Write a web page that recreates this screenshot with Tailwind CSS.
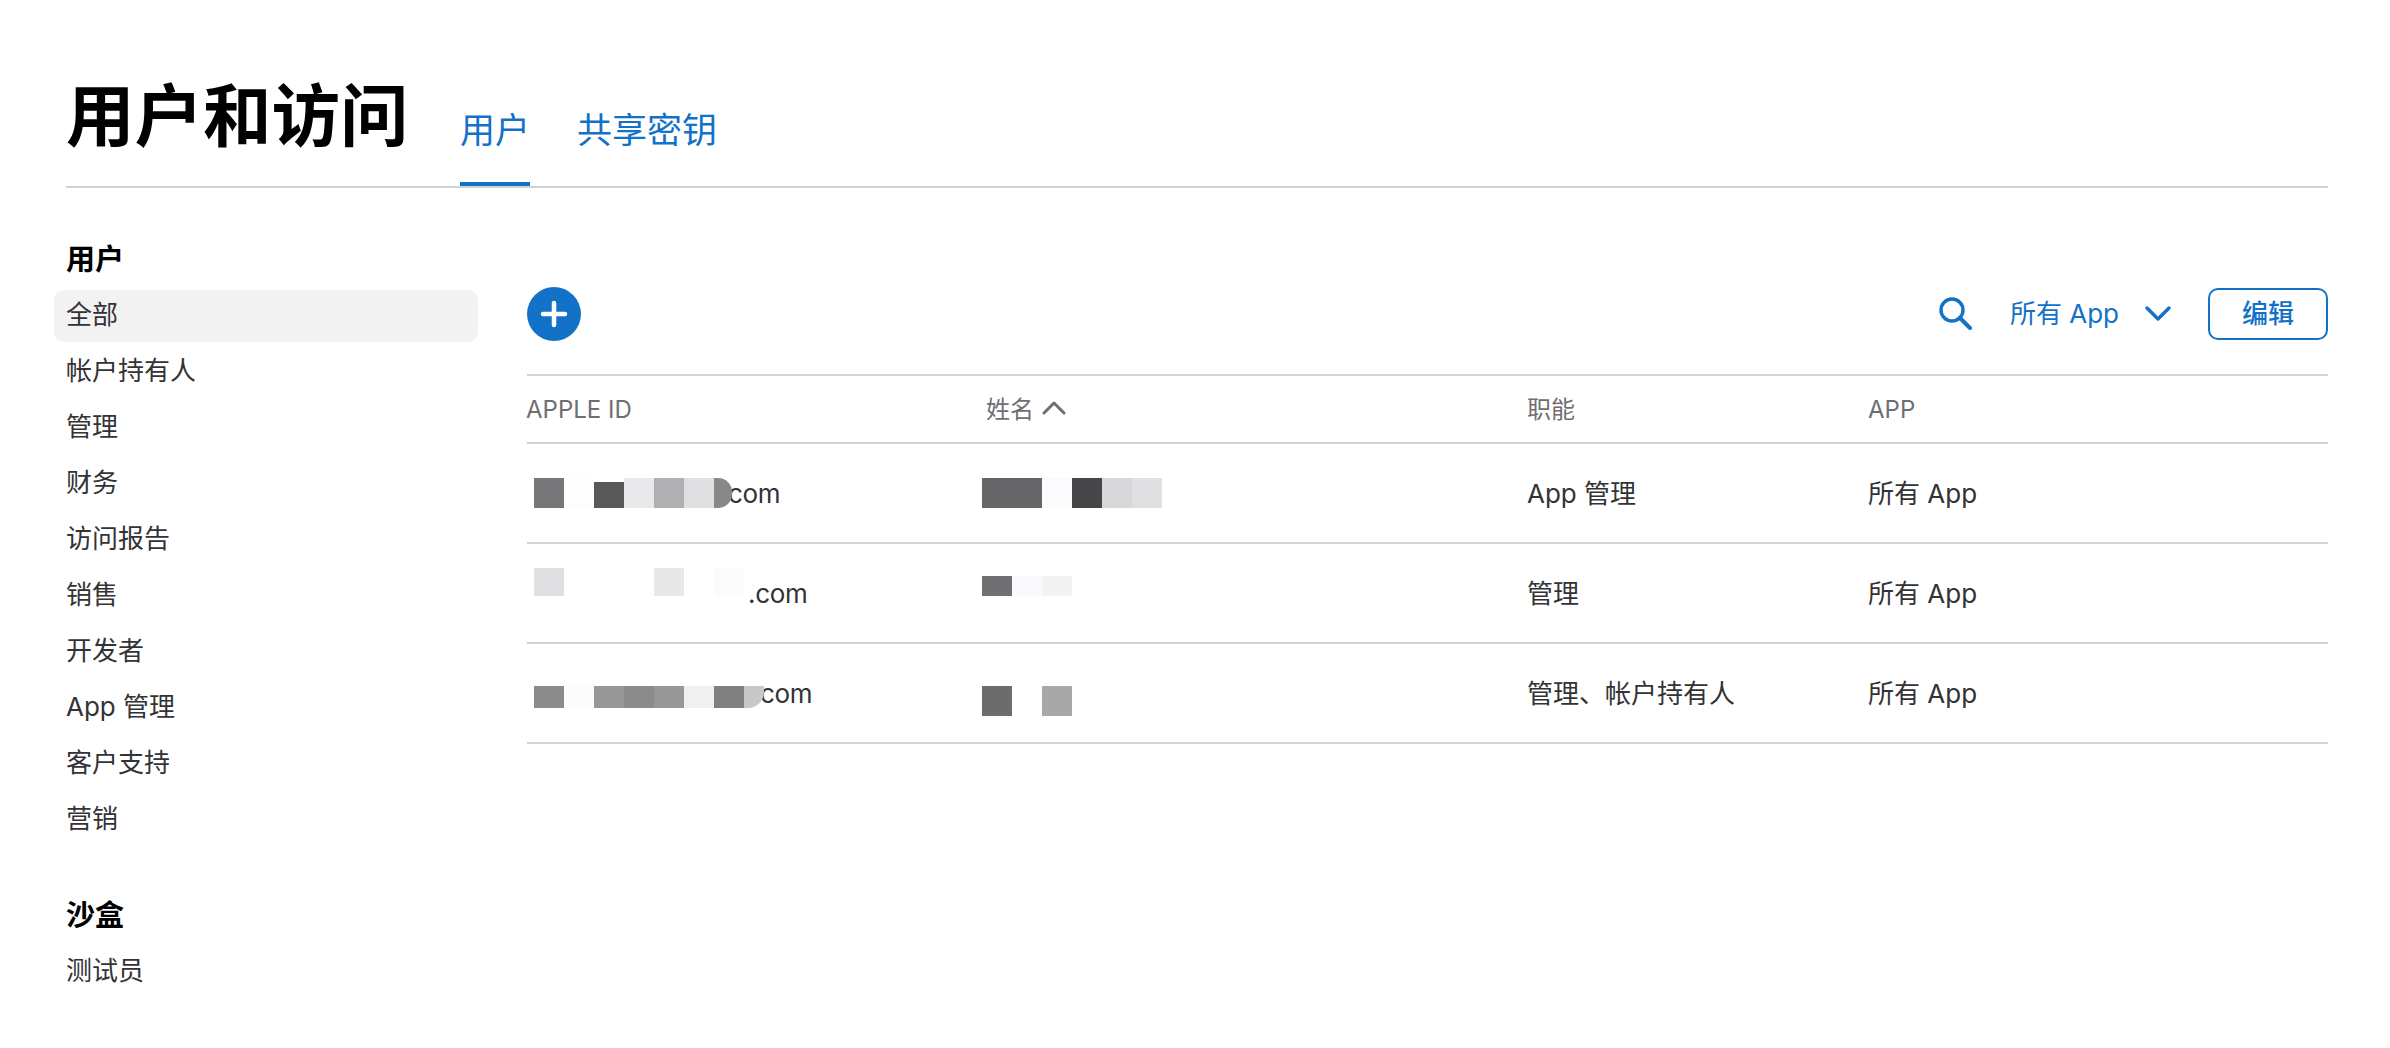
<!DOCTYPE html>
<html lang="zh-CN">
<head>
  <meta charset="UTF-8">
  <title>用户和访问</title>
  <script src="https://cdn.jsdelivr.net/npm/@tailwindcss/browser@4"></script>
</head>
<body class="bg-white h-[1048px] overflow-hidden pl-[66px] pr-[62px] font-['Inter','Noto_Sans_CJK_SC',sans-serif] text-[#333336]">
  <!-- page header -->
  <header class="flex items-start h-[188px] border-b-2 border-[#d2d2d2]">
    <h1 class="mt-[72px] text-[68.5px] leading-[90px] font-bold text-black w-[394px]">用户和访问</h1>
    <nav class="flex gap-[47px] mt-[105px] text-[35px] leading-[50px] text-[#1272c8]">
      <a class="block h-[81px] w-[70px] border-b-4 border-[#1272c8]">用户</a>
      <a class="block">共享密钥</a>
    </nav>
  </header>

  <div class="flex">
    <!-- sidebar -->
    <aside class="w-[461px] shrink-0 pt-[50px] text-[26px]">
      <h2 class="h-[52px] leading-[44px] text-[29px] font-bold text-black">用户</h2>
      <ul class="[&>li]:h-[56px] [&>li]:leading-[50px]">
        <li class="relative"><span class="absolute -left-[12px] top-[0px] w-[424px] h-[52px] rounded-[10px] bg-[#f2f2f2]"></span><span class="relative">全部</span></li>
        <li>帐户持有人</li>
        <li>管理</li>
        <li>财务</li>
        <li>访问报告</li>
        <li>销售</li>
        <li>开发者</li>
        <li>App 管理</li>
        <li>客户支持</li>
        <li>营销</li>
      </ul>
      <h2 class="mt-[44px] h-[52px] leading-[44px] text-[29px] font-bold text-black">沙盒</h2>
      <ul><li class="leading-[50px]">测试员</li></ul>
    </aside>

    <!-- users table -->
    <main class="flex-1 min-w-0">
      <div class="flex items-center justify-between h-[188px] pt-[65px] border-b-2 border-[#d2d2d2]">
        <button class="w-[54px] h-[54px] rounded-full bg-[#1272c8] flex items-center justify-center">
          <svg width="28" height="28" viewBox="0 0 28 28" fill="none" stroke="white" stroke-width="4.5" stroke-linecap="round"><path d="M14 3v22M3 14h22"/></svg>
        </button>
        <div class="flex items-center text-[#1272c8]">
          <svg class="mr-[38px]" width="33" height="33" viewBox="0 0 33 33" fill="none" stroke="#1272c8" stroke-width="3.4" stroke-linecap="round"><circle cx="13" cy="13" r="11"/><path d="M21 21l10 10" stroke-width="4"/></svg>
          <span class="text-[26px] leading-[52px]">所有 App</span>
          <svg class="ml-[26px] mr-[37px]" width="26" height="16" viewBox="0 0 26 16" fill="none" stroke="#1272c8" stroke-width="3.4" stroke-linecap="round" stroke-linejoin="round"><path d="M2 2l11 11L24 2"/></svg>
          <button class="w-[120px] h-[52px] border-2 border-[#1272c8] rounded-[10px] text-[26px] font-medium">编辑</button>
        </div>
      </div>

      <div class="grid grid-cols-[460px_540px_341px_1fr] items-center h-[68px] pt-[2px] border-b-2 border-[#d2d2d2] text-[24px] text-[#6e6e73]">
        <div class="-ml-[1px]">APPLE ID</div>
        <div class="flex items-center -ml-[1px]">姓名
          <svg class="ml-[8px] -mt-[4px]" width="24" height="14" viewBox="0 0 24 14" fill="none" stroke="#6e6e73" stroke-width="3" stroke-linecap="round" stroke-linejoin="round"><path d="M2 12L12 2l10 10"/></svg>
        </div>
        <div>职能</div>
        <div>APP</div>
      </div>

      <div class="grid grid-cols-[460px_540px_341px_1fr] items-center h-[100px] border-b-2 border-[#d2d2d2] text-[26px]">
        <div class="flex items-center pl-[7px]">
          <div class="relative flex h-[30px]">
            <i class="w-[30px] bg-[#777779]"></i><i class="w-[30px] bg-[#fdfdfd]"></i><i class="w-[30px] mt-[4px] bg-[#58585a]"></i><i class="w-[30px] bg-[#e9e9eb]"></i><i class="w-[30px] bg-[#b0b0b2]"></i><i class="w-[30px] bg-[#e0e0e2]"></i><i class="w-[18px] rounded-r-[14px] bg-[#888888]"></i>
          </div>
          <span class="-ml-[4px] tracking-[-0.3px]">com</span>
        </div>
        <div class="flex -ml-[5px] h-[30px]">
          <i class="w-[60px] bg-[#666668]"></i><i class="w-[30px] bg-[#fbfbfd]"></i><i class="w-[30px] bg-[#464648]"></i><i class="w-[30px] bg-[#d8d8da]"></i><i class="w-[30px] bg-[#e0e0e2]"></i>
        </div>
        <div>App 管理</div>
        <div>所有 App</div>
      </div>

      <div class="grid grid-cols-[460px_540px_341px_1fr] items-center h-[100px] border-b-2 border-[#d2d2d2] text-[26px]">
        <div class="flex items-center pl-[7px]">
          <div class="flex w-[210px] h-[28px] -mt-[22px]">
            <i class="w-[30px] bg-[#e0e0e2]"></i><i class="w-[90px]"></i><i class="w-[30px] bg-[#e8e8e8]"></i><i class="w-[30px]"></i><i class="w-[30px] bg-[#fbfbfc]"></i>
          </div>
          <span class="ml-[4px] tracking-[-0.3px]">.com</span>
        </div>
        <div class="flex -ml-[5px] h-[20px] -mt-[14px]">
          <i class="w-[30px] bg-[#707072]"></i><i class="w-[30px] bg-[#fafafc]"></i><i class="w-[30px] bg-[#f3f3f3]"></i>
        </div>
        <div>管理</div>
        <div>所有 App</div>
      </div>

      <div class="grid grid-cols-[460px_540px_341px_1fr] items-center h-[100px] border-b-2 border-[#d2d2d2] text-[26px]">
        <div class="flex items-center pl-[7px]">
          <div class="relative flex h-[22px] mt-[8px]">
            <i class="w-[30px] bg-[#8c8c8c]"></i><i class="w-[30px] bg-[#fcfcfc]"></i><i class="w-[30px] bg-[#979797]"></i><i class="w-[30px] bg-[#8b8b8b]"></i><i class="w-[30px] bg-[#979797]"></i><i class="w-[30px] bg-[#f0f0f0]"></i><i class="w-[30px] bg-[#808080]"></i><i class="w-[20px] rounded-br-[16px] bg-[#c8c8c8]"></i>
          </div>
          <span class="-ml-[4px] tracking-[-0.3px]">com</span>
        </div>
        <div class="flex -ml-[5px] h-[30px] mt-[16px]">
          <i class="w-[30px] bg-[#6c6c6c]"></i><i class="w-[30px]"></i><i class="w-[30px] bg-[#a8a8a8]"></i>
        </div>
        <div>管理、帐户持有人</div>
        <div>所有 App</div>
      </div>
    </main>
  </div>
</body>
</html>
